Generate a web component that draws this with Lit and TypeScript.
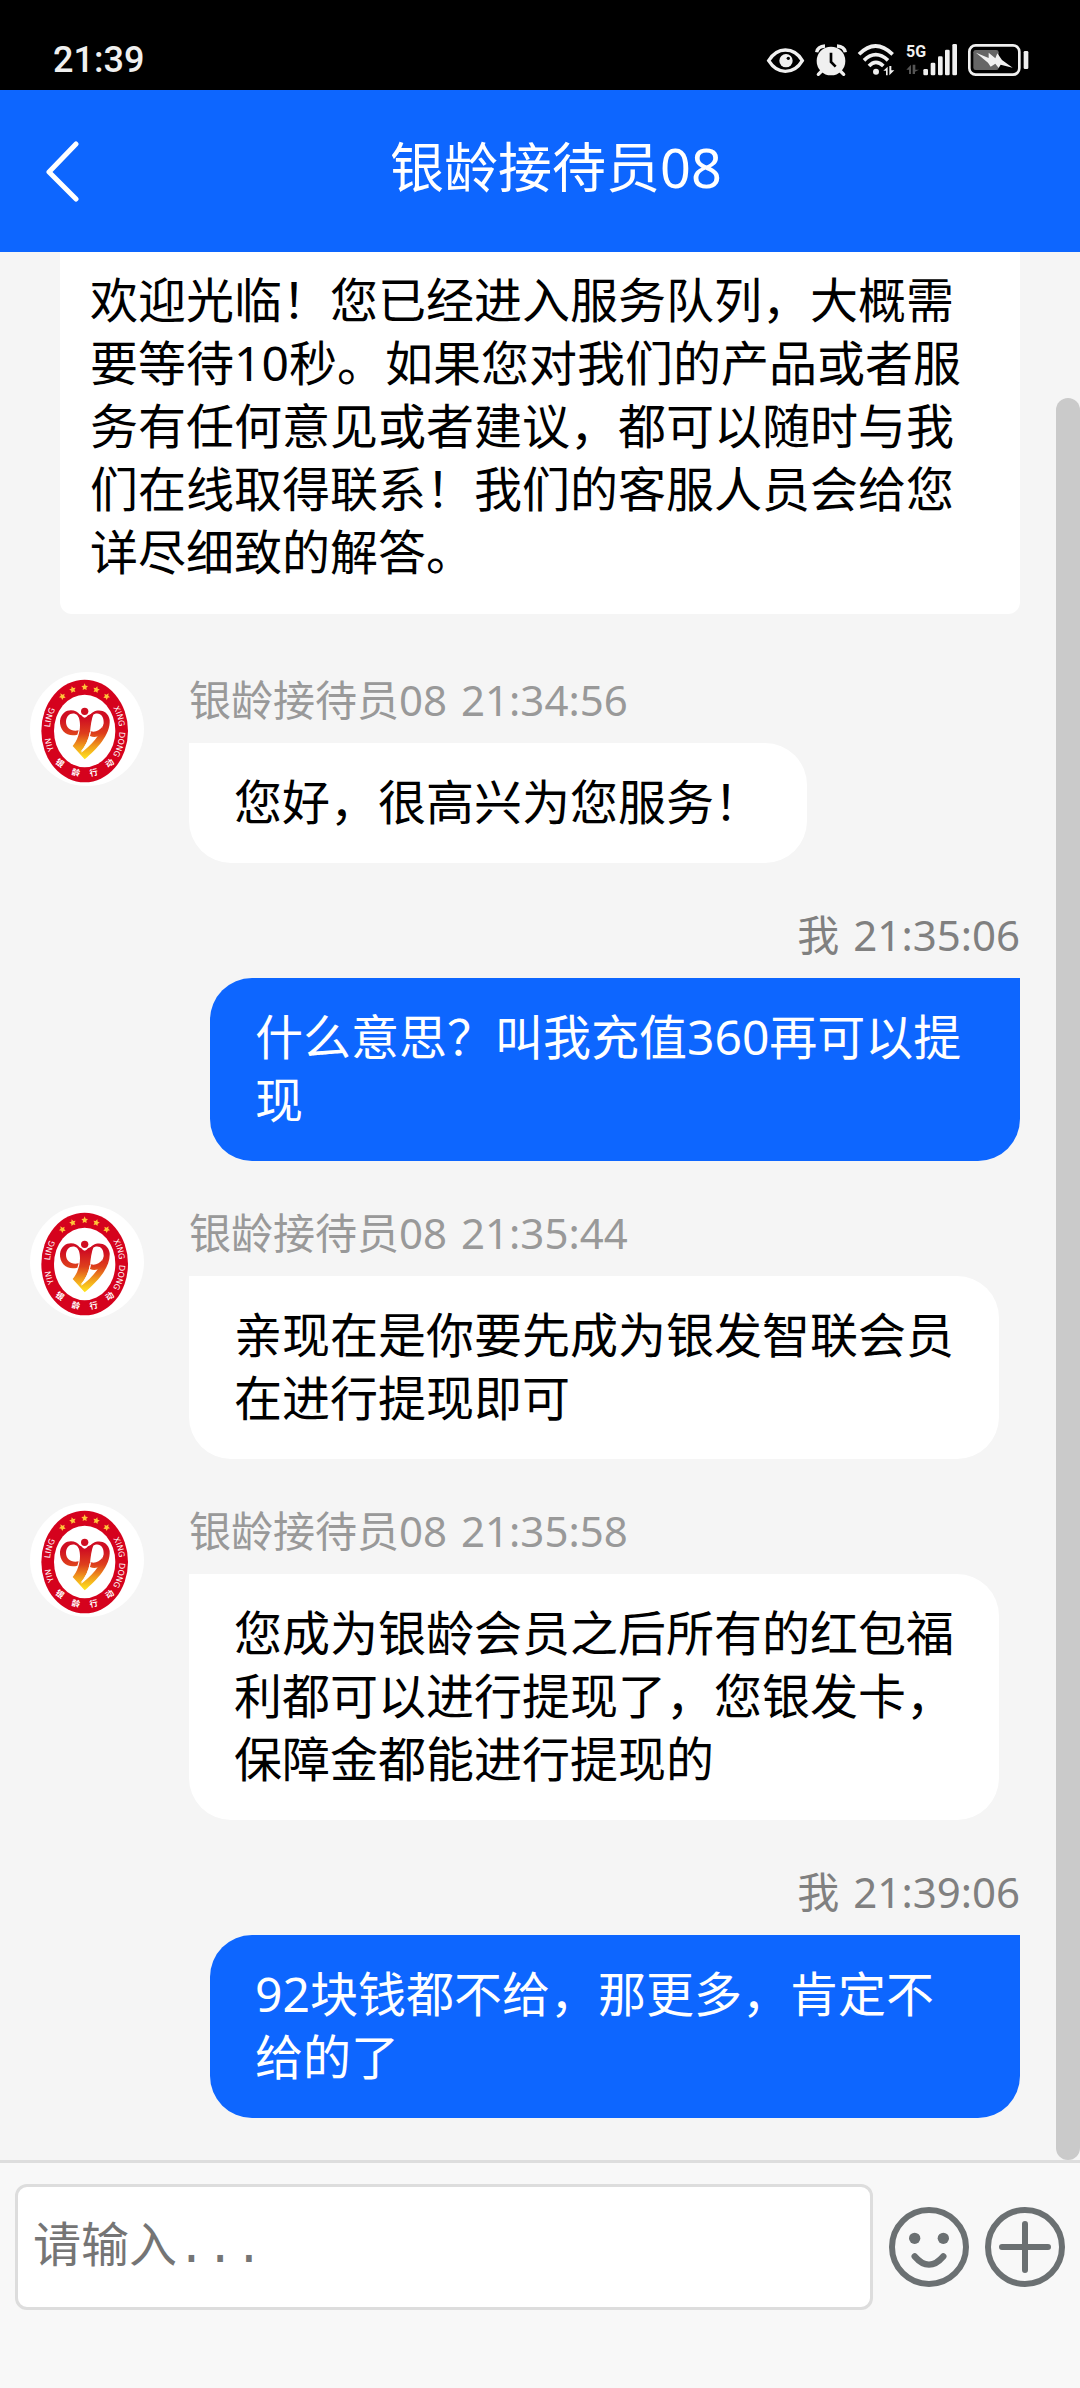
import { LitElement, html, svg, css } from "lit";
import { customElement, property } from "lit/decorators.js";

interface Message {
  mine: boolean;
  name: string;
  time: string;
  text: string;
}

const MESSAGES: Message[] = [
  { mine: false, name: "银龄接待员08", time: "21:34:56", text: "您好，很高兴为您服务！" },
  { mine: true, name: "我", time: "21:35:06", text: "什么意思？叫我充值360再可以提现" },
  { mine: false, name: "银龄接待员08", time: "21:35:44", text: "亲现在是你要先成为银发智联会员在进行提现即可" },
  { mine: false, name: "银龄接待员08", time: "21:35:58", text: "您成为银龄会员之后所有的红包福利都可以进行提现了，您银发卡，保障金都能进行提现的" },
  { mine: true, name: "我", time: "21:39:06", text: "92块钱都不给，那更多，肯定不给的了" },
];

const STAR = "M0 -11 L3 -4 L10 -3 L5 2 L6 9 L0 6 L-6 9 L-5 2 L-10 -3 L-3 -4 Z";
const STARS = [
  [112, 85, -32],
  [143, 65, -16],
  [179, 57, 0],
  [214, 65, 16],
  [245, 85, 32],
];
const SEAL = [
  ["银", 105, 285, 36],
  ["龄", 153, 313, 12],
  ["行", 206, 313, -12],
  ["动", 254, 285, -36],
];

@customElement("brand-avatar")
export class BrandAvatar extends LitElement {
  static styles = css`
    :host {
      display: block;
      width: 114px;
      height: 114px;
    }
    svg {
      display: block;
      width: 100%;
      height: 100%;
    }
    .latin {
      font: 500 24px "DejaVu Sans", sans-serif;
      fill: #fff;
      text-anchor: middle;
    }
    .han {
      font: 700 25px "Noto Sans CJK SC", sans-serif;
      fill: #fff;
      text-anchor: middle;
    }
  `;

  render() {
    return html`
      <svg viewBox="15 12 342 342" role="img" aria-label="银龄行动">
        <defs>
          <linearGradient id="flame" gradientUnits="userSpaceOnUse" x1="0" y1="36" x2="0" y2="190">
            <stop offset="0.2" stop-color="#cf0e22" />
            <stop offset="0.5" stop-color="#de3f1c" />
            <stop offset="0.74" stop-color="#f09a1c" />
            <stop offset="1" stop-color="#ffe81e" />
          </linearGradient>
          <path id="left" d="M179 313 A104 124 0 0 1 179 65" />
          <path id="right" d="M179 65 A104 124 0 0 1 179 313" />
        </defs>
        <circle cx="186" cy="183" r="171" fill="#fff" />
        <ellipse cx="179" cy="189" rx="130" ry="154" fill="#d5021d" />
        <ellipse cx="179" cy="189" rx="92" ry="109" fill="#fff" />
        ${STARS.map(
          ([x, y, a]) => svg`<path d=${STAR} fill="#ffc53a" transform="translate(${x} ${y}) rotate(${a})" />`,
        )}
        <text class="latin"><textPath href="#left" startOffset="39%">YIN</textPath></text>
        <text class="latin"><textPath href="#left" startOffset="61%">LING</textPath></text>
        <text class="latin"><textPath href="#right" startOffset="38%">XING</textPath></text>
        <text class="latin"><textPath href="#right" startOffset="61%">DONG</textPath></text>
        ${SEAL.map(
          ([c, x, y, a]) => svg`<text class="han" transform="translate(${x} ${y}) rotate(${a})" y="9">${c}</text>`,
        )}
        <g transform="translate(81 84)">
          <g fill="url(#flame)">
            <circle cx="98" cy="46" r="11" />
            <path d="M84 58 C72 36 30 36 24 74 C22 104 46 124 76 116 L80 103 C58 108 42 96 42 78 C42 60 56 49 70 54 C75 56 79 60 82 66Z" />
            <path d="M72 50 L88 58 Q98 72 108 58 L126 50 C118 68 116 90 114 108 C110 130 100 150 88 168 L98 190 L62 150 C76 134 84 110 84 88 C84 70 80 60 72 50Z" />
            <path d="M112 60 C124 36 168 36 173 72 C176 116 134 160 98 190 L86 172 C116 150 148 116 155 82 C156 60 144 49 128 54 C122 56 118 60 114 66Z" />
            <path d="M116 106 C130 110 142 104 153 90 L146 116 C136 124 124 124 114 120Z" />
          </g>
          <path d="M115 108 C111 132 101 150 88 166" fill="none" stroke="#fff" stroke-width="3" />
        </g>
      </svg>
    `;
  }
}

@customElement("chat-message")
export class ChatMessage extends LitElement {
  @property({ attribute: false }) message!: Message;

  static styles = css`
    :host {
      display: block;
    }
    .row {
      display: flex;
      gap: 45px;
      padding: 0 57px 0 30px;
    }
    .row.mine {
      justify-content: flex-end;
      padding: 0 36px 0 210px;
    }
    .avatar {
      flex: none;
    }
    .column {
      display: flex;
      flex-direction: column;
      align-items: flex-start;
      gap: 16px;
      min-width: 0;
    }
    .mine .column {
      align-items: flex-end;
    }
    .meta {
      display: flex;
      gap: 14px;
      font-size: 42px;
      line-height: 55px;
      color: #999;
    }
    .mine .meta {
      color: #808080;
    }
    .bubble {
      margin: 0;
      padding: 27px 45px 30px;
      border-radius: 0 42px 42px 42px;
      background: #fff;
      color: #000;
      font-size: 48px;
      line-height: 63px;
      overflow-wrap: anywhere;
    }
    .mine .bubble {
      border-radius: 42px 0 42px 42px;
      background: #0d66ff;
      color: #fff;
    }
  `;

  render() {
    const { mine, name, time, text } = this.message;
    return html`
      <article class="row ${mine ? "mine" : ""}">
        ${mine ? "" : html`<brand-avatar class="avatar"></brand-avatar>`}
        <div class="column">
          <div class="meta"><span>${name}</span> <time>${time}</time></div>
          <p class="bubble">${text}</p>
        </div>
      </article>
    `;
  }
}

@customElement("app-root")
export class AppRoot extends LitElement {
  static styles = css`
    :host {
      display: flex;
      flex-direction: column;
      min-height: 100vh;
      background: #f8f8f8;
      font-family: "Noto Sans", "Noto Sans CJK SC", sans-serif;
    }
    svg {
      display: block;
    }
    button {
      padding: 0;
      border: 0;
      background: none;
      color: inherit;
    }
    .status {
      display: flex;
      align-items: center;
      justify-content: space-between;
      height: 60px;
      padding: 30px 51px 0 53px;
      background: #000;
      color: #f0f0f0;
    }
    .clock {
      font: 500 36px/60px Roboto, sans-serif;
    }
    .indicators {
      display: flex;
      gap: 11px;
    }
    .indicators svg {
      height: 33px;
      overflow: visible;
    }
    .network {
      font: 700 48px "Liberation Sans Narrow", Roboto, sans-serif;
    }
    .header {
      display: grid;
      grid-template-columns: 108px 1fr 76px;
      align-items: center;
      height: 162px;
      background: #0d66ff;
      color: #fff;
    }
    .back {
      display: flex;
      justify-content: center;
      height: 100%;
      align-items: center;
      padding-left: 16px;
    }
    .title {
      margin: 0;
      padding-bottom: 9px;
      text-align: center;
      font-weight: 400;
      font-size: 54px;
      line-height: 72px;
    }
    .chat {
      flex: 1;
      display: grid;
      grid-template-columns: 1fr 24px;
      background: #f5f5f5;
    }
    .thread {
      display: flex;
      flex-direction: column;
      gap: 44px;
      padding-bottom: 42px;
    }
    .welcome {
      margin: 0 36px 14px 60px;
      padding: 16px 30px 31px;
      border-radius: 0 0 12px 12px;
      background: #fff;
      color: #000;
      font-size: 48px;
      line-height: 63px;
    }
    .rail {
      display: flex;
      flex-direction: column;
      padding-top: 146px;
    }
    .thumb {
      flex: 1;
      border-radius: 12px;
      background: #cacaca;
    }
    .composer {
      display: flex;
      align-items: center;
      gap: 16px;
      height: 126px;
      padding: 21px 15px 78px;
      border-top: 3px solid #ddd;
      color: #6b7072;
    }
    .field {
      flex: 1;
      min-width: 0;
      box-sizing: border-box;
      height: 126px;
      padding: 4px 15px 0;
      border: 3px solid #ddd;
      border-radius: 12px;
      background: #fff;
      color: #000;
      font: 48px "Liberation Mono", "Noto Sans CJK SC", monospace;
      outline: 0;
    }
    .field::placeholder {
      color: #757575;
      opacity: 1;
    }
    .tool {
      flex: none;
      width: 80px;
      height: 80px;
    }
    .composer svg {
      width: 100%;
      height: 100%;
    }
  `;

  private renderIndicators() {
    return html`
      <div class="indicators" aria-hidden="true">
        <svg viewBox="0 0 111 99" fill="none" stroke="#f0f0f0">
          <path d="M5 50 C20 26 38 18 55 18 C72 18 92 26 106 50 C92 74 72 82 55 82 C38 82 20 74 5 50Z" stroke-width="10" />
          <circle cx="57" cy="50" r="20" fill="#f0f0f0" stroke="none" />
          <circle cx="64" cy="43" r="5" fill="#000" stroke="none" />
        </svg>
        <svg viewBox="0 0 96 99" fill="#f0f0f0">
          <circle cx="48" cy="51" r="43" />
          <path d="M5 25 Q8 7 30 6M66 6 Q88 7 91 25" fill="none" stroke="#f0f0f0" stroke-width="10" />
          <path d="M20 81 L10 91M76 81 L86 91" stroke="#f0f0f0" stroke-width="10" stroke-linecap="round" />
          <path d="M48 26 V54 L62 68" fill="none" stroke="#000" stroke-width="8" />
        </svg>
        <svg viewBox="0 0 111 99" fill="#f0f0f0">
          <g fill="none" stroke="#f0f0f0" stroke-width="11">
            <path d="M3 31 Q52 -19 104 31" />
            <path d="M18 49 Q53 15 90 49" />
            <path d="M33 66 Q53 44 76 66" />
          </g>
          <circle cx="54" cy="83" r="9" />
          <path d="M89 68 V94 H84 V80 H76Z M94 66 V94 L109 79 H100 V66Z" />
        </svg>
        <svg viewBox="0 0 153 99" fill="#f0f0f0">
          <text class="network" x="0" y="38">5G</text>
          <path d="M15 62 V90 H9 V77 H1Z M20 62 V90 L27 90 V83 L39 77 H28 V62Z" fill="#555" />
          <rect x="52" y="75" width="14" height="19" rx="4" />
          <rect x="74" y="56" width="14" height="38" rx="4" />
          <rect x="96" y="37" width="14" height="57" rx="4" />
          <rect x="117" y="17" width="14" height="77" rx="4" />
          <rect x="139" y="0" width="14" height="94" rx="4" />
        </svg>
        <svg viewBox="0 0 183 99">
          <rect x="4" y="4" width="150" height="88" rx="19" fill="none" stroke="#f0f0f0" stroke-width="8" />
          <rect x="16" y="18" width="76" height="60" rx="7" fill="#666" />
          <path d="M24 26 L62 42 L62 26 L82 43 L88 28 L102 48 L134 71 L98 62 L92 72 L82 59 L68 68 L60 56Z" fill="#f0f0f0" />
          <rect x="167" y="21" width="14" height="54" rx="4" fill="#f0f0f0" />
        </svg>
      </div>
    `;
  }

  render() {
    return html`
      <div class="status">
        <time class="clock">21:39</time>
        ${this.renderIndicators()}
      </div>
      <header class="header">
        <button class="back" type="button" aria-label="返回">
          <svg width="33" height="61" viewBox="0 0 33 61" fill="none" stroke="#fff" stroke-width="5" stroke-linecap="round" stroke-linejoin="round">
            <path d="M30 3 L3 31 L30 58" />
          </svg>
        </button>
        <h1 class="title">银龄接待员08</h1>
      </header>
      <main class="chat">
        <div class="thread">
          <p class="welcome">欢迎光临！您已经进入服务队列，大概需要等待10秒。如果您对我们的产品或者服务有任何意见或者建议，都可以随时与我们在线取得联系！我们的客服人员会给您详尽细致的解答。</p>
          ${MESSAGES.map((m) => html`<chat-message .message=${m}></chat-message>`)}
        </div>
        <div class="rail" aria-hidden="true"><div class="thumb"></div></div>
      </main>
      <form class="composer" @submit=${(e: Event) => e.preventDefault()}>
        <input class="field" type="text" aria-label="消息" placeholder="请输入..." />
        <button class="tool" type="button" aria-label="表情">
          <svg viewBox="0 0 240 240" fill="currentColor">
            <circle cx="120" cy="120" r="111" fill="none" stroke="currentColor" stroke-width="18" />
            <circle cx="77" cy="94" r="17" />
            <circle cx="163" cy="94" r="17" />
            <path d="M77 148 Q120 198 163 148" fill="none" stroke="currentColor" stroke-width="19" stroke-linecap="round" />
          </svg>
        </button>
        <button class="tool" type="button" aria-label="更多">
          <svg viewBox="0 0 240 240" fill="none" stroke="currentColor" stroke-width="18" stroke-linecap="round">
            <circle cx="120" cy="120" r="111" />
            <path d="M120 51 V189M51 120 H189" />
          </svg>
        </button>
      </form>
    `;
  }
}
